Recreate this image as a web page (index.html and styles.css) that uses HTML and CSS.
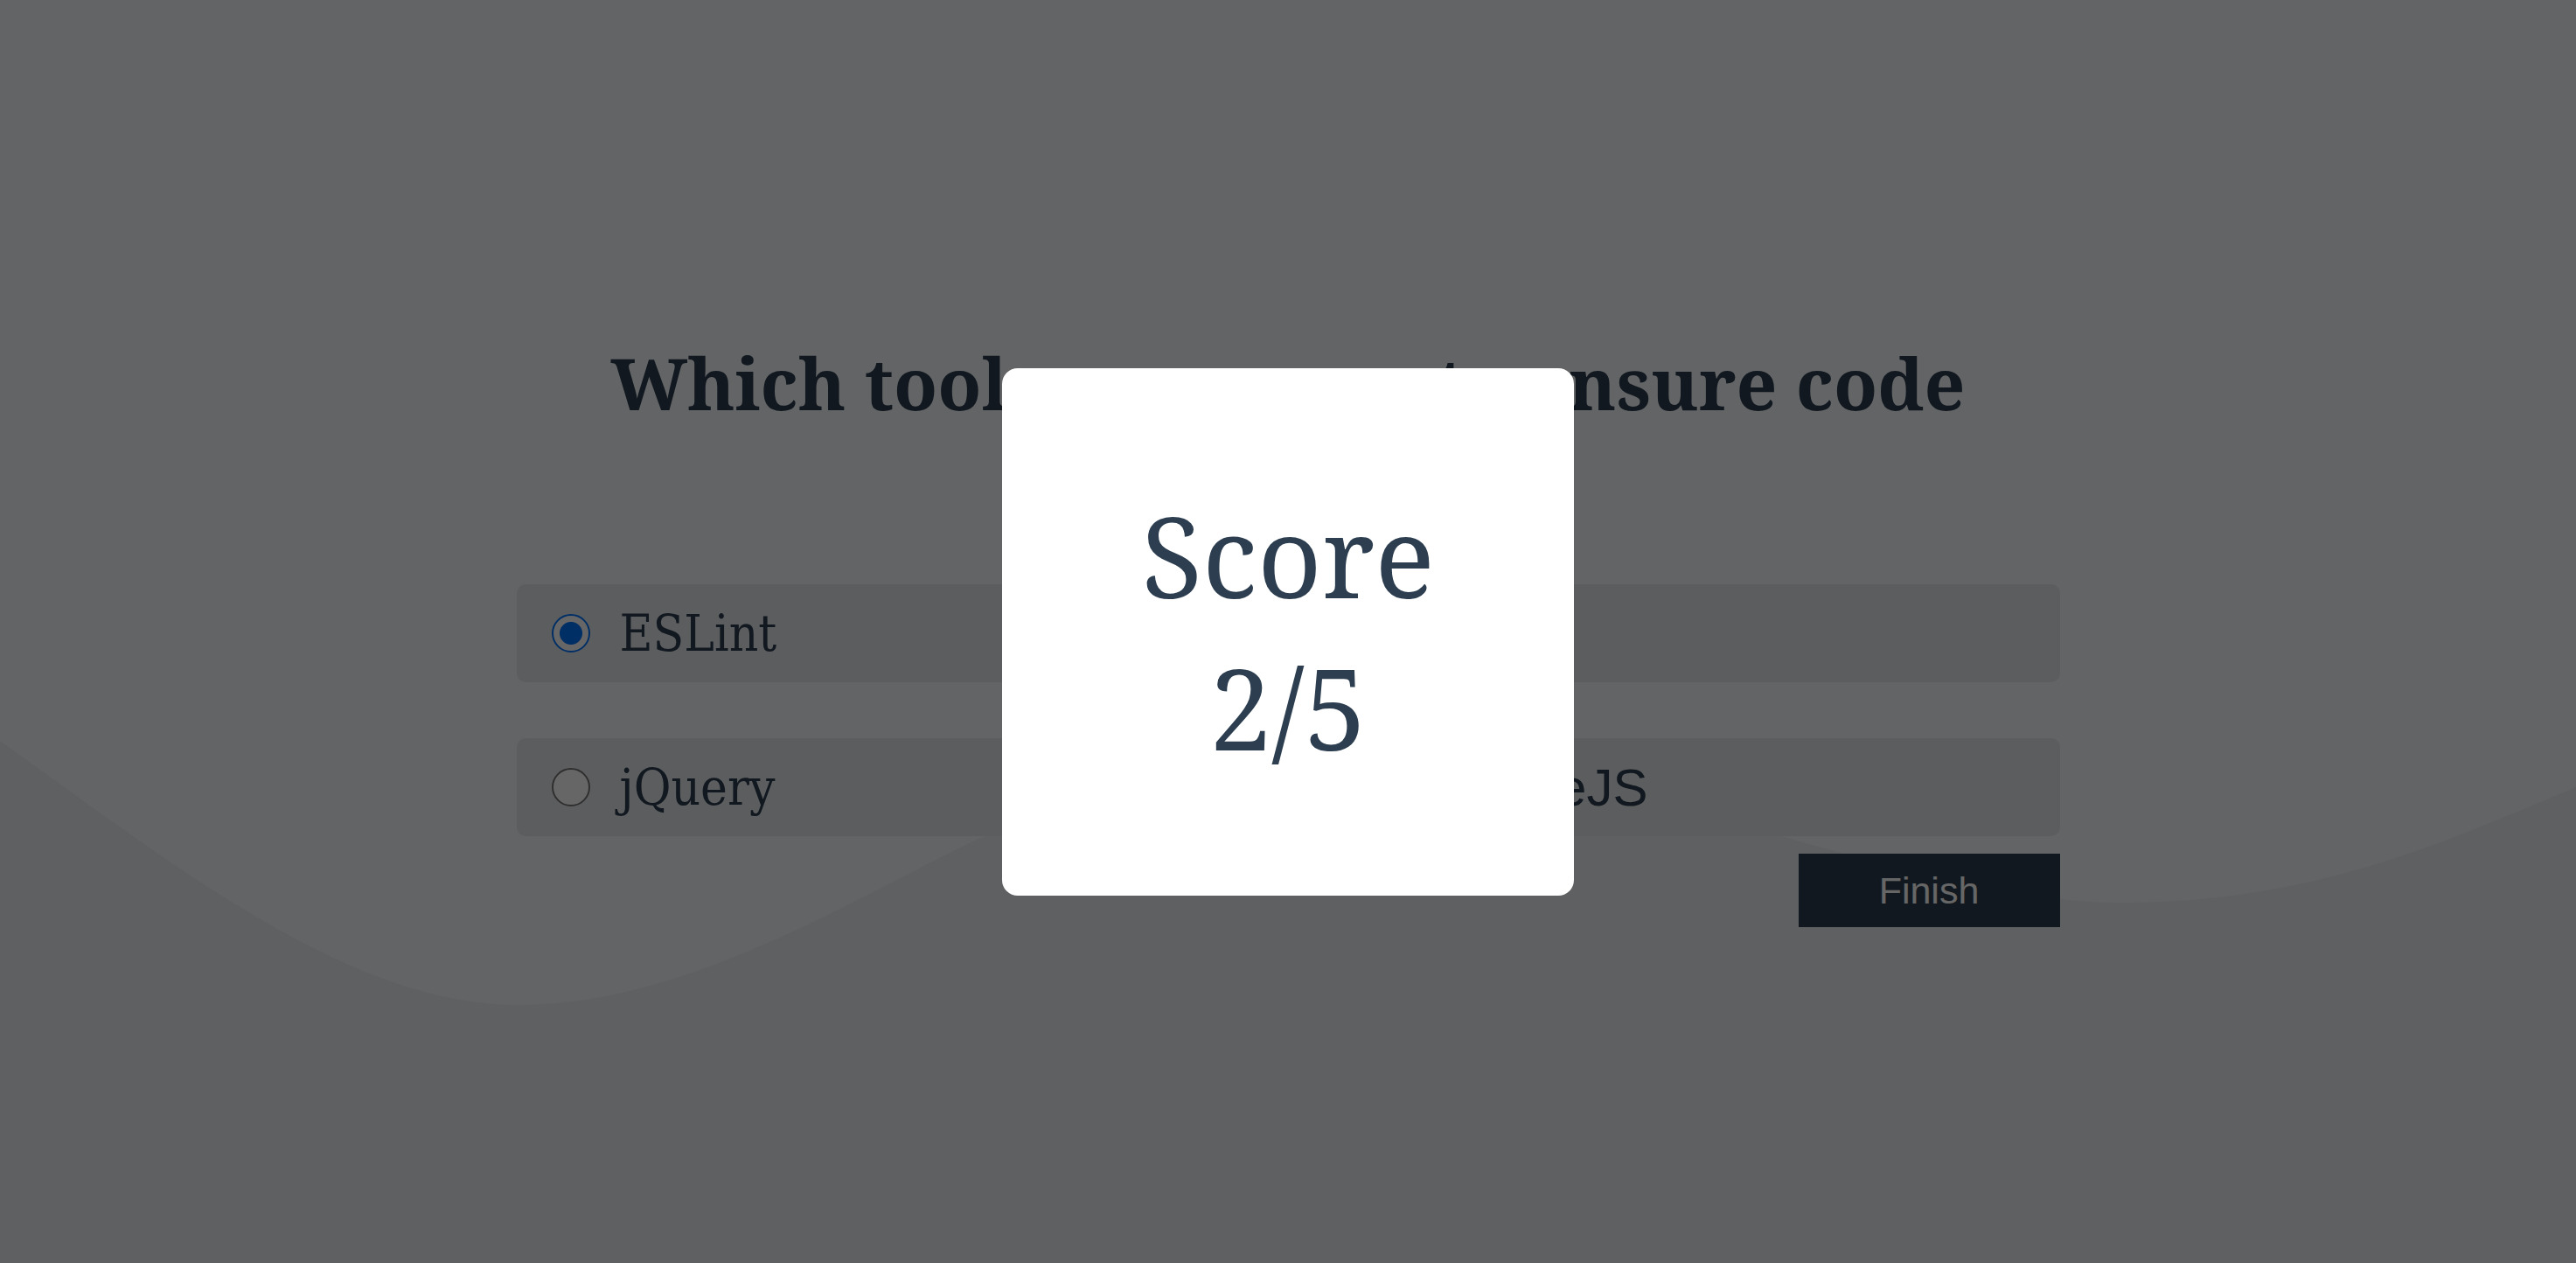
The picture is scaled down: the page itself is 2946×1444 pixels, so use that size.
FILE: index.html
```html
<!DOCTYPE html>
<html lang="en">
<head>
<meta charset="utf-8">
<title>Quiz</title>
<link rel="stylesheet" href="styles.css">
</head>
<body>
<div class="page">
  <svg class="wave" viewBox="0 0 2946 1444" preserveAspectRatio="none" aria-hidden="true">
    <path d="M0,847 C200,990 400,1149 592,1149 C800,1149 1000,1010 1150,945 C1400,850 1700,860 1950,930 C2150,990 2300,1032 2425,1032 C2650,1032 2800,960 2946,900 L2946,1444 L0,1444 Z"/>
  </svg>
  <main class="quiz">
    <h1 class="question">Which tool can we use to ensure code quality?</h1>
    <div class="options">
      <label class="option"><input type="radio" name="answer" checked><span class="label">ESLint</span></label>
      <label class="option"><input type="radio" name="answer"><span class="label">Jest</span></label>
      <label class="option"><input type="radio" name="answer"><span class="label">jQuery</span></label>
      <label class="option"><input type="radio" name="answer"><span class="label label-sans">NodeJS</span></label>
    </div>
    <div class="actions">
      <button class="finish" type="button">Finish</button>
    </div>
  </main>
  <div class="backdrop">
    <div class="modal">
      <p class="modal-line">Score</p>
      <p class="modal-line">2/5</p>
    </div>
  </div>
</div>
</body>
</html>
```
FILE: styles.css
```css
html, body {
  margin: 0;
  padding: 0;
}

body {
  background: #f7f9fc;
  font-family: "Liberation Sans", Arial, sans-serif;
}

.page {
  position: relative;
  min-height: 100vh;
  overflow: hidden;
}

.wave {
  position: absolute;
  left: 0;
  top: 0;
  width: 100%;
  height: 100%;
  z-index: 0;
}

.wave path {
  fill: #edf0f4;
}

.quiz {
  position: relative;
  z-index: 1;
  width: 1765px;
  margin: 0 auto;
  padding-top: 381px;
}

.question {
  margin: 0 0 63px;
  font-family: "Noto Serif", "DejaVu Serif", serif;
  font-weight: 700;
  font-size: 82px;
  line-height: 112px;
  color: #2c3e50;
  text-align: center;
}

.options {
  display: grid;
  grid-template-columns: 1fr 1fr;
  column-gap: 160px;
  row-gap: 64px;
}

.option {
  display: flex;
  align-items: center;
  gap: 34px;
  height: 112px;
  padding-left: 40px;
  background: #e7e9ed;
  border-radius: 10px;
  font-family: "DejaVu Serif", serif;
  font-stretch: condensed;
  font-size: 58px;
  color: #2c3e50;
}

.option input {
  appearance: none;
  -webkit-appearance: none;
  flex: none;
  width: 44px;
  height: 44px;
  margin: 0;
  border: 2px solid #767676;
  border-radius: 50%;
  background: #fff;
}

.option input:checked {
  border: 2px solid #0075ff;
  background: radial-gradient(circle, #0075ff 0 12.5px, #fff 13.5px);
}

.label-sans {
  font-family: "Liberation Sans", Arial, sans-serif;
  font-stretch: normal;
  font-size: 60px;
}

.actions {
  display: flex;
  justify-content: flex-end;
  margin-top: 20px;
}

.finish {
  width: 299px;
  height: 84px;
  border: 0;
  border-radius: 0;
  background: #2c3e50;
  color: #ffffff;
  font-family: "Liberation Sans", Arial, sans-serif;
  font-size: 43px;
  padding: 0;
}

.backdrop {
  position: fixed;
  inset: 0;
  z-index: 10;
  display: flex;
  align-items: center;
  justify-content: center;
  background: rgba(0, 0, 0, 0.6);
}

.modal {
  width: 654px;
  height: 603px;
  background: #fff;
  border-radius: 18px;
  display: flex;
  flex-direction: column;
  align-items: center;
  justify-content: center;
  font-family: "Noto Serif", "DejaVu Serif", serif;
  font-size: 128px;
  color: #2c3e50;
}

.modal-line {
  margin: 0;
  line-height: 174px;
}
```
